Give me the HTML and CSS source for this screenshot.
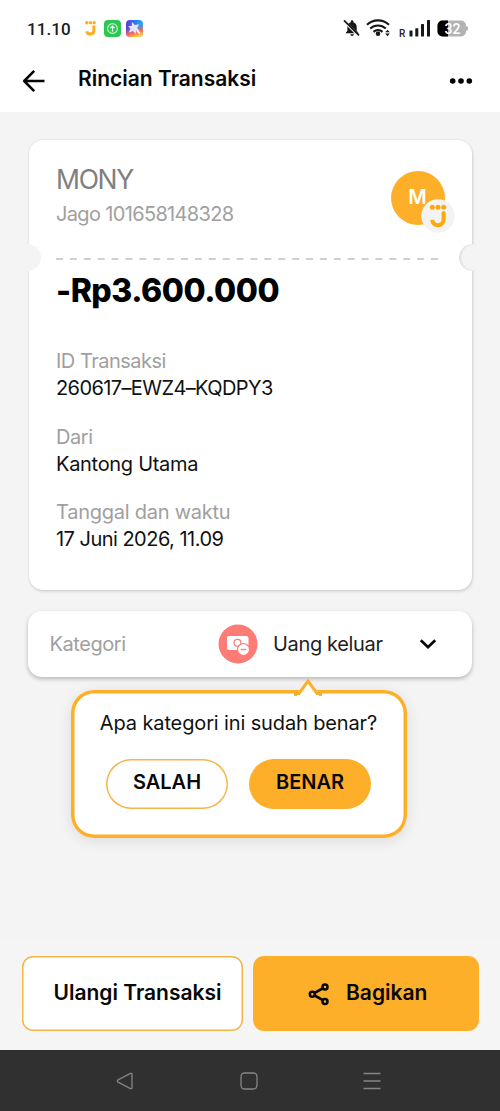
FILE: index.html
```html
<!DOCTYPE html>
<html lang="id">
<head>
<meta charset="utf-8">
<title>Rincian Transaksi</title>
<link rel="stylesheet" href="styles.css">
</head>
<body>
<div class="screen">
  <div class="status">
    <span class="clock">11.10</span>
    <svg class="status-apps" width="62" height="20" viewBox="0 0 62 20">
      <defs>
        <linearGradient id="sky" x1="0" y1="0.2" x2="1" y2="0.4"><stop offset="0" stop-color="#6a35d8"/><stop offset="0.45" stop-color="#2878f0"/><stop offset="1" stop-color="#25b6f0"/></linearGradient>
        <linearGradient id="glow" x1="0.3" y1="0" x2="0.6" y2="1"><stop offset="0.4" stop-color="#ff4a6a" stop-opacity="0"/><stop offset="0.75" stop-color="#ff6a50"/><stop offset="1" stop-color="#ffd23c"/></linearGradient>
      </defs>
      <g fill="#fcae1c"><circle cx="2.8" cy="4.700" r="1.700"/><circle cx="6.5" cy="4.700" r="1.700"/><circle cx="10.2" cy="4.700" r="1.700"/></g>
      <path d="M9.900 7.500v5a3.600 3.600 0 0 1-7.100.8" fill="none" stroke="#fcae1c" stroke-width="3"/>
      <rect x="20" y="2" width="17" height="17" rx="4" fill="#2fc553"/>
      <circle cx="28.500" cy="10.500" r="4.900" fill="none" stroke="#c8f5d2" stroke-width="1.100"/>
      <path d="M28.500 13.700v-5.500M26.300 10.200l2.200-2.200 2.200 2.200" fill="none" stroke="#e8ffec" stroke-width="1.200"/>
      <g transform="translate(0 1)">
        <rect x="42" y="1" width="17" height="17" rx="4" fill="url(#sky)"/>
        <rect x="42" y="1" width="17" height="17" rx="4" fill="url(#glow)"/>
        <path d="M48 3l2.800 3 4.400-.8-2 3.700 2.300 3-3.200-.3-.6 3.200-2.800-2.800-4.200 1.700 1.700-4-2.300-2.400 3.600-.4z" fill="#e9e4ff"/>
        <path d="M53 11.500l3 3" stroke="#fff" stroke-width="1.800"/>
      </g>
    </svg>
    <svg class="status-system" width="126" height="20" viewBox="0 0 126 20">
      <g fill="#171717">
        <path d="M2.500 15.200l1.900-2.500V8.900c0-2.400 1.300-4 3.400-4.600V3.600a1.300 1.300 0 0 1 2.600 0v.7c2.100.6 3.300 2.200 3.300 4.600v3.800l2 2.500zM7.300 16.200h3.600a1.800 1.800 0 0 1-3.600 0z"/>
        <path d="M1 3.200l14.500 14.500" stroke="#fff" stroke-width="2.600"/>
        <path d="M1 2.300l15 15" stroke="#171717" stroke-width="1.700"/>
        <circle cx="35" cy="15.800" r="2.300"/>
        <path d="M44.500 11.700l2.300 2.600h-4.600zM44.500 18.200l2.300-2.600h-4.600z"/>
        <rect x="66.500" y="12.500" width="3" height="6" rx=".5"/><rect x="72.300" y="10.200" width="3" height="8.300" rx=".5"/><rect x="78" y="6" width="3" height="12.500" rx=".5"/><rect x="84" y="2" width="3" height="16.500" rx=".5"/>
      </g>
      <g fill="none" stroke="#171717" stroke-width="2.100"><path d="M24 6.800a16 16 0 0 1 22 0"/><path d="M27.200 10.600a11.200 11.200 0 0 1 15.600 0"/><path d="M30.500 13.900a6.700 6.700 0 0 1 9 0"/></g>
      <text x="56" y="18.500" class="roaming">R</text>
      <rect x="94.500" y="2.500" width="28.500" height="16" rx="5" fill="#b3b3b3"/>
      <path d="M123 8l2 1v3l-2 1z" fill="#b3b3b3"/>
      <path d="M99.500 2.500h5.500v16h-5.500a5 5 0 0 1-5-5V7.500a5 5 0 0 1 5-5z" fill="#000"/>
      <text x="101.500" y="15.500" class="battery">32</text>
    </svg>
  </div>

  <header class="appbar">
    <svg class="back" width="24" height="24" viewBox="0 0 24 24"><path d="M12.200 1.900L2.200 12l10 10.100M2.500 12h20" fill="none" stroke="#050505" stroke-width="2.500" stroke-linejoin="round"/></svg>
    <h1 class="title">Rincian Transaksi</h1>
    <svg class="more" width="24" height="8" viewBox="0 0 24 8"><circle cx="3.700" cy="4" r="2.800"/><circle cx="12" cy="4" r="2.800"/><circle cx="20.300" cy="4" r="2.800"/></svg>
  </header>

  <main class="content">
    <section class="receipt">
      <div class="payee">
        <div class="payee-text">
          <div class="name">MONY</div>
          <div class="account">Jago 101658148328</div>
        </div>
        <div class="avatar">M
          <svg class="bank" width="34" height="34" viewBox="0 0 34 34"><circle cx="17" cy="17" r="16.700" fill="#f3f3f3"/><g fill="#fca90f"><circle cx="11.300" cy="8.300" r="2.500"/><circle cx="17" cy="8.300" r="2.500"/><circle cx="22.700" cy="8.300" r="2.500"/></g><path d="M22.600 14v6.200a5.700 5.700 0 0 1-11.400.6" fill="none" stroke="#fca90f" stroke-width="4"/><circle cx="22.600" cy="14" r="2" fill="#fca90f"/></svg>
        </div>
      </div>
      <svg class="perforation" width="388" height="2" viewBox="0 0 388 2"><path d="M0 1h384" stroke="#d0d0d0" stroke-width="2" stroke-dasharray="7 6.890"/></svg>
      <div class="amount">-Rp3.600.000</div>
      <dl class="details">
        <div class="detail"><dt class="l-id">ID Transaksi</dt><dd class="v-id">260617–EWZ4–KQDPY3</dd></div>
        <div class="detail"><dt class="l-from">Dari</dt><dd class="v-from">Kantong Utama</dd></div>
        <div class="detail"><dt class="l-time">Tanggal dan waktu</dt><dd class="v-time">17 Juni 2026, 11.09</dd></div>
      </dl>
    </section>

    <section class="category">
      <span class="category-label">Kategori</span>
      <svg class="category-icon" width="40" height="40" viewBox="0 0 40 40"><circle cx="20" cy="20" r="19.500" fill="#ff7b76"/><rect x="9" y="12" width="21.500" height="14" rx="2" fill="#fff"/><circle cx="19.500" cy="18.700" r="3.400" fill="none" stroke="#ff7b76" stroke-width="1.200"/><circle cx="25.500" cy="25.500" r="6" fill="#fff" stroke="#ff7b76" stroke-width="1.200"/><path d="M22.700 25.500h5.600" stroke="#ff7b76" stroke-width="1.300"/></svg>
      <span class="category-name">Uang keluar</span>
      <svg class="chevron" width="18" height="12" viewBox="0 0 18 12"><path d="M1.800 2.200L9 9.200l7.200-7" fill="none" stroke="#080808" stroke-width="2.700"/></svg>
    </section>

    <section class="confirm">
      <svg class="pointer" width="30" height="19" viewBox="0 0 30 19"><path d="M5.500 13.500L15 2l9.500 11.500 1.500 4.500H4z" fill="#fff"/><path d="M2.500 18v-2.500h3.500L15 3l9 12.500h3.500v2.500" fill="none" stroke="#fdaf29" stroke-width="3"/></svg>
      <p class="question">Apa kategori ini sudah benar?</p>
      <div class="answers">
        <button class="answer no">SALAH</button>
        <button class="answer yes">BENAR</button>
      </div>
    </section>
  </main>

  <footer class="actions">
    <button class="action repeat">Ulangi Transaksi</button>
    <button class="action share">
      <svg width="22" height="24" viewBox="0 0 22 24"><g fill="none" stroke="#080808" stroke-width="2.500"><path d="M17 5L4.500 12.200 17 19.400" stroke-width="2.700"/><g fill="#fdaf29"><circle cx="4.300" cy="12.200" r="2.500"/><circle cx="17" cy="4.900" r="2.500"/><circle cx="17" cy="19.400" r="2.500"/></g></g></svg>
      <span>Bagikan</span>
    </button>
  </footer>

  <nav class="navbar">
    <svg width="20" height="18" viewBox="0 0 20 18"><path d="M15.500 1.400L3 7.900a1.200 1.200 0 0 0 0 2.200l12.500 6.500q1.500.5 1.500-1V2.400q0-1.500-1.500-1z"/></svg>
    <svg width="18" height="18" viewBox="0 0 18 18"><rect x="1" y="1" width="16" height="16" rx="3.500"/></svg>
    <svg width="18" height="18" viewBox="0 0 18 18"><path d="M.5 1.500h17M.5 9h17M.5 16.500h17"/></svg>
  </nav>
</div>
</body>
</html>
```
FILE: styles.css
```css
* { box-sizing: border-box; }
body { margin: 0; background: #f4f4f4; color: #111; font-family: Inter, "Liberation Sans", sans-serif; font-size: 20px; }
h1, p, dl, dd { margin: 0; }
svg { display: block; flex: none; }
button { font: inherit; color: #080808; border: 0; padding: 0; }

.screen { width: 500px; height: 1111px; display: flex; flex-direction: column; overflow: hidden; white-space: nowrap; }

.status { height: 50px; padding: 18px 31px 0 27px; display: flex; background: #fff; }
.clock { width: 57px; font: 500 17px/22px Roboto, sans-serif; letter-spacing: .1px; color: #1c1c1c; }
.status-system { margin-left: auto; }
.roaming { font: 500 10px Roboto, sans-serif; fill: #222; }
.battery { font: 500 14px Roboto, sans-serif; fill: #fff; }

.appbar { height: 62px; padding: 0 27px 0 22px; display: flex; background: #fff; }
.back { margin-top: 19px; }
.title { margin-left: 32px; font-size: 21px; font-weight: 600; line-height: 57px; color: #080808; }
.more { margin: 27px 0 0 auto; }

.content { flex: 1; padding: 28px 28px 0; }
.receipt { position: relative; height: 450px; margin: 0 .5px; padding: 24px 27.5px 0; background: #fff; border-radius: 14px; box-shadow: 0 0 2px rgba(0,0,0,.16), 1px 2px 3px rgba(0,0,0,.1); }
.receipt::before, .receipt::after { content: ""; position: absolute; top: 104px; width: 27px; height: 27px; border-radius: 50%; background: #f4f4f4; }
.receipt::before { left: -14.6px; }
.receipt::after { right: -14px; box-shadow: inset 2px 0 2px rgba(0,0,0,.08); clip-path: inset(0 10px 0 0); }
.payee { display: flex; justify-content: space-between; height: 94px; }
.name { font-size: 26.5px; line-height: 31px; letter-spacing: -1.3px; color: #808080; }
.account { margin-top: 5px; line-height: 28px; color: #a0a0a0; letter-spacing: -.66px; }
.avatar { position: relative; width: 54px; height: 54px; margin: 7px -.5px 0 0; border-radius: 50%; background: #fdaf29; color: #fff; font-size: 20px; font-weight: 600; line-height: 52px; text-align: center; }
.bank { position: absolute; left: 30.5px; top: 28px; }
.amount { margin-top: 10px; font-size: 32px; line-height: 41px; font-weight: 800; letter-spacing: -.45px; color: #000; }
.details { margin-top: 36px; display: grid; gap: 20px; }
dt { line-height: 28px; color: #a0a0a0; }
dd { line-height: 27.5px; }
.l-id { letter-spacing: -.5px; }
.l-from { letter-spacing: -.4px; }
.l-time { letter-spacing: -.25px; }
.v-id { letter-spacing: -.6px; }
.v-from { letter-spacing: -.3px; }
.v-time { letter-spacing: -.52px; }

.category { margin-top: 21px; height: 66px; padding-left: 21.5px; display: flex; align-items: center; background: #fff; border-radius: 14px; box-shadow: 0 2px 4px rgba(0,0,0,.26); }
.category-label { width: 168.5px; color: #a0a0a0; letter-spacing: -.45px; }
.category-name { margin-left: 15px; width: 146px; color: #222; letter-spacing: -.35px; }

.confirm { position: relative; width: 336px; height: 148px; margin: 13px 0 0 42.5px; padding: 18px 35.5px 0; border-radius: 23px; background: #fff; box-shadow: inset 0 0 0 3.5px #fdaf29, 0 3px 14px rgba(0,0,0,.1); }
.pointer { position: absolute; left: 222.5px; top: -12px; }
.question { line-height: 30px; text-align: center; margin: 0 -20px; letter-spacing: -.13px; }
.answers { display: flex; gap: 21px; margin-top: 20.5px; }
.answer { width: 122px; height: 50px; padding-bottom: 4px; border-radius: 25px; font-weight: 600; }
.no { background: #fff; box-shadow: inset 0 0 0 1.5px #f4b54b; }
.yes { background: #fdaf29; }

.actions { height: 110px; padding: 16px 21.5px 0 21.5px; display: flex; gap: 10.5px; background: #f5f5f5; }
.action { height: 75px; border-radius: 11px; font-size: 21px; font-weight: 600; }
.repeat { width: 221px; padding: 0 0 2px 11px; background: #fff; box-shadow: inset 0 0 0 1.5px #f4b54b; }
.share { flex: 1; display: flex; align-items: center; padding-left: 55px; background: #fdaf29; }
.share span { margin: 0 0 2px 16px; }

.navbar { height: 61px; padding-left: 115px; display: grid; grid-template-columns: 125px 123px 18px; align-items: center; background: #303030; }
.navbar svg { fill: none; stroke: #858585; stroke-width: 1.3; }
```
